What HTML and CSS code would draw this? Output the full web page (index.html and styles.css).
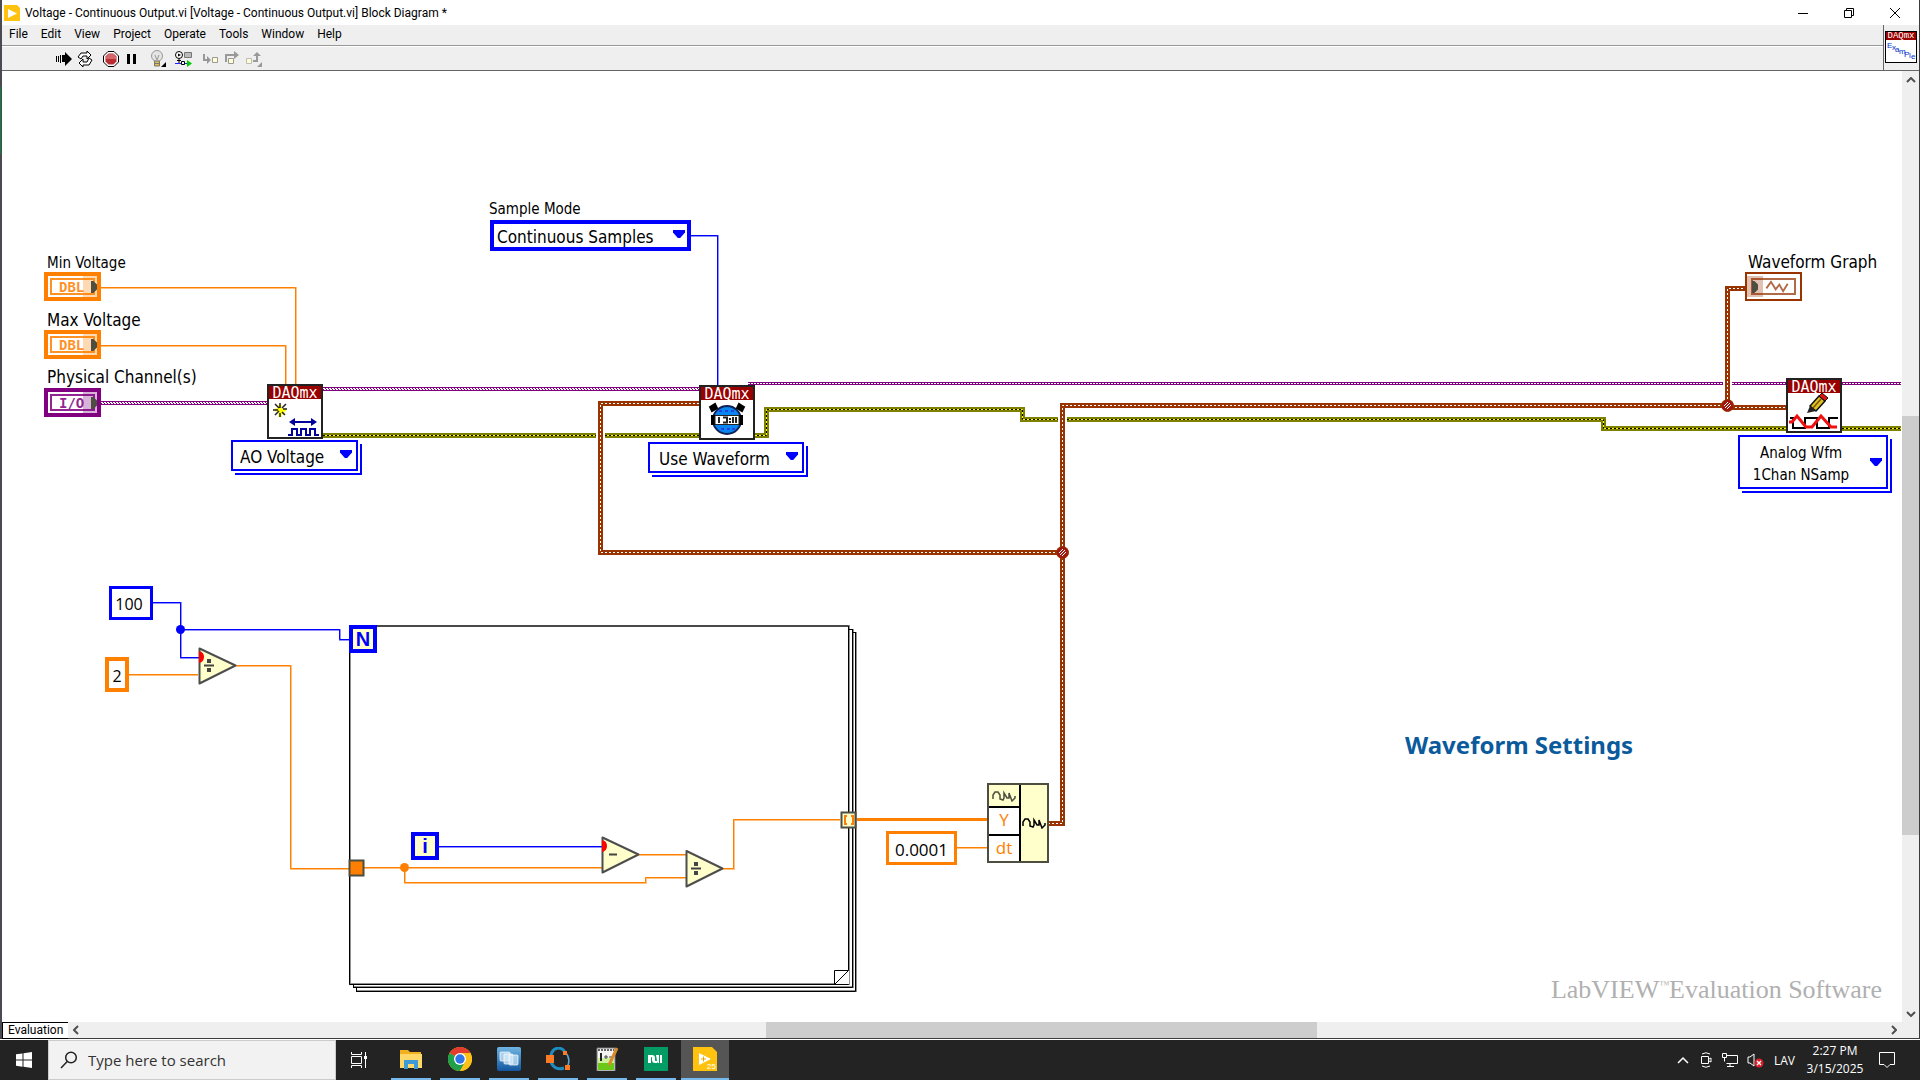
FILE: index.html
```html
<!DOCTYPE html>
<html lang="en">
<head>
<meta charset="utf-8">
<title>Voltage - Continuous Output.vi Block Diagram</title>
<link rel="stylesheet" href="styles.css">
</head>
<body>
<div class="window">
  <header class="titlebar">
    <svg class="app-icon" width="16" height="16" viewBox="0 0 16 16" aria-hidden="true"><path d="M0 0h13l3 3v13H0z" fill="#ffc20e"/><path d="M4 4l9 4.500-9 4.500z" fill="#fff"/></svg>
    <h1>Voltage - Continuous Output.vi [Voltage - Continuous Output.vi] Block Diagram *</h1>
    <div class="window-buttons">
      <button aria-label="Minimize"><svg width="12" height="12" viewBox="0 0 12 12"><path d="M1 6.500h10" stroke="#000"/></svg></button>
      <button aria-label="Restore"><svg width="12" height="12" viewBox="0 0 12 12"><path d="M1.500 3.500h7v7h-7zM3.500 3V1.500h7v7H9" fill="none" stroke="#000"/></svg></button>
      <button aria-label="Close"><svg width="12" height="12" viewBox="0 0 12 12"><path d="M1 1l10 10M11 1L1 11" stroke="#000"/></svg></button>
    </div>
  </header>
  <div class="bars">
    <div class="bars-left">
      <nav class="menubar">
        <a href="#">File</a><a href="#">Edit</a><a href="#">View</a><a href="#">Project</a><a href="#">Operate</a><a href="#">Tools</a><a href="#">Window</a><a href="#">Help</a>
      </nav>
      <div class="toolbar">
        <button aria-label="Run"><svg width="16" height="16" viewBox="0 0 16 16"><path d="M0 5h1v6H0zM2 5h1v6H2zM4 4h1v8H4zM6 4h3V1l7 7-7 7v-4H6z"/></svg></button>
        <button aria-label="Run continuously"><svg width="16" height="16" viewBox="0 0 16 16" fill="#fff" stroke="#000"><path d="M1 6l3-4h6V0l4 4-4 4V5H6L4 8zM15 9l-3 5H6v2l-4-4 4-4v3h4l2-4z"/></svg></button>
        <button class="abort" aria-label="Abort"><svg width="16" height="16" viewBox="0 0 16 16"><path d="M5 .5h6L15.500 5v6L11 15.500H5L.5 11V5z" fill="#fff" stroke="#000"/><path d="M5.500 2.500h5l3 3v5l-3 3h-5l-3-3v-5z" fill="#b82c32"/><path d="M5.500 3h5l2.500 2.500V8H3V5.500z" fill="#d5666a"/></svg></button>
        <button aria-label="Pause"><svg width="16" height="16" viewBox="0 0 16 16"><path d="M3 3h3v10H3zM9 3h3v10H9z"/></svg></button>
        <button class="bulb" aria-label="Highlight execution"><svg width="16" height="18" viewBox="0 0 16 18"><circle cx="7" cy="6" r="5.500" fill="#e4e4e4" stroke="#999"/><path d="M5 5l2 5 2-5" fill="none" stroke="#999"/><path d="M4.500 11h5v5h-5z" fill="#e3bd45" stroke="#777"/><path d="M5 13.500h4" stroke="#777"/><path d="M16 12v5h-5z"/></svg></button>
        <button class="retain" aria-label="Retain wire values"><svg width="17" height="16" viewBox="0 0 17 16"><circle cx="4" cy="4" r="3.500" fill="#fff" stroke="#000"/><path d="M3 2.500L6 4 3 5.500zM3.500 7.500h1V12h-1zM2 9h4v1H2z"/><path d="M9.500 1.500h7v5h-7z" fill="#bbb" stroke="#777"/><path d="M0 12.500h12" stroke="#22f"/><path d="M6.500 10.500h3v3h-3z" fill="#fff" stroke="#000"/><path d="M12 9l5 3.500-5 3.500z" fill="#0c0"/></svg></button>
        <button class="step" aria-label="Step into"><svg width="17" height="16" viewBox="0 0 17 16"><path d="M2 3v6h4" fill="none" stroke="#999" stroke-width="2"/><path d="M5 5l4 4-4 4z" fill="#999"/><path d="M10.500 6.500h5v5h-5z" fill="#ffffd0" stroke="#999"/></svg></button>
        <button aria-label="Step over"><svg width="16" height="16" viewBox="0 0 16 16"><path d="M2 11V4h9" fill="none" stroke="#999" stroke-width="2"/><path d="M10 0l5 4-5 4z" fill="#999"/><path d="M4.500 7.500h5v5h-5z" fill="#ffffd0" stroke="#999"/></svg></button>
        <button aria-label="Step out"><svg width="18" height="16" viewBox="0 0 18 16"><path d="M1.500 7.500h5v5h-5z" fill="#ffffd0" stroke="#bbb"/><path d="M8 10h4V5" fill="none" stroke="#999" stroke-width="2"/><path d="M8 5l4-4 4 4z" fill="#999"/><path d="M17 11v5h-5z" fill="#999"/></svg></button>
      </div>
    </div>
    <div class="vi-icon"><div class="vi-box"><b>DAQmx</b><svg width="30" height="22" viewBox="0 0 30 22" class="example"><text x="1" y="8">E</text><text x="6" y="10">x</text><text x="9" y="12">a</text><text x="13" y="14">m</text><text x="18" y="17">P</text><text x="23" y="18">l</text><text x="25" y="19">e</text></svg></div></div>
  </div>
  <div class="work">
    <main class="canvas">
      <div class="sheet">
        <svg class="wires" width="10" height="10" aria-hidden="true">
          <g class="error"><path d="M323 435.500H596M605 435.500H766.500V409.500H1022.500V419.500H1058M1067 419.500H1603.500V428.500H1901"/><path class="core" d="M323 435.500H596M605 435.500H766.500V409.500H1022.500V419.500H1058M1067 419.500H1603.500V428.500H1901"/><path class="dash" d="M323 435.500H596M605 435.500H766.500V409.500H1022.500V419.500H1058M1067 419.500H1603.500V428.500H1901"/></g>
          <g class="task"><path d="M101 403H267M323 389H699"/><path class="t-dots" d="M101 402.500H267M323 388.500H699"/><path class="t-dots" d="M102 403.500H267M324 389.500H699"/><path class="thin" d="M748 383.500H1723M1732 383.500H1901"/><path class="t-dots" d="M748 383.500H1723M1732 383.500H1901"/></g>
          <g class="wave"><path d="M699 403.500H600.500V552.500H1062.500M1048 823.500H1062.500V405.500H1727.500V288.500H1746M1727 407.500H1786"/><path class="dash" d="M699 403.500H600.500V552.500H1062.500M1048 823.500H1062.500V405.500H1727.500V288.500H1746M1727 407.500H1786"/></g>
          <g class="joint"><circle cx="1062.500" cy="552.500" r="6"/><circle cx="1727.500" cy="405.500" r="6"/><path d="M1060 555l5-5M1059 553l4-4M1062 556l4-4M1725 408l5-5M1724 406l4-4M1727 409l4-4"/></g>
          <g class="dbl-halo"><path d="M101 288H296V384M101 346H286V384M129 675H198M236 666H291V869H349M364 868H602M405 868V883H646V878H686M639 855H686M722 869H734V820H840M957 848H987"/></g>
          <g class="dbl"><path d="M101 287.500H295.500V384M101 345.500H285.500V384M129 674.500H198M236 665.500H290.500V868.500H349M364 867.500H602M404.500 867.500V882.500H645.500V877.500H686M639 854.500H686M722 868.500H733.500V819.500H840M957 847.500H987"/><path class="array" d="M857 819.500H987"/></g>
          <g class="int-halo"><path d="M691 236H718V385M153 603H181V658H199M180 630H340V640H349M439 847H602"/></g>
          <g class="int"><path d="M691 235.500H717.500V385M153 602.500H180.500V657.500H199M180 629.500H339.500V639.500H349M439 846.500H602"/></g>
          <circle cx="180.500" cy="629.500" r="4.500" fill="#00f"/><circle cx="404.500" cy="867.500" r="4.500" fill="#ff8000"/>
          <g class="loop-halo"><path d="M356 991H856V632M353 987H853V629M350 626V984H849V626z"/></g>
          <g class="loop"><path d="M356 991.500H855.500V632M353 987.500H852.500V629M349.500 626V984.500H848.500V626zM353.500 985V988M356.500 988V992M849 629.500H853M853 632.500H856"/></g>
          <path d="M834 984h15v-14z" fill="#fff"/><path d="M834.500 984.500V970.500H848.500z" fill="#fff" stroke="#000"/>
          <g class="fn"><path d="M199.500 648.500L235.500 665.500 199.500 683.500z"/><path d="M602.500 837.500L638.500 854.500 602.500 872.500z"/><path d="M686.500 851L722.500 868.500 686.500 886.500z"/></g>
          <g fill="#444"><path d="M204 664.500h10v2h-10zM207 659h4v4h-4zM207 668h4v4h-4zM609 853.500h8v2h-8zM691 867.500h10v2h-10zM694 862h4v4h-4zM694 871h4v4h-4z"/></g>
          <path d="M199 651q5 1 5 6t-5 6zM602 840q5 1 5 6t-5 6z" fill="red"/>
          <path d="M349.500 860.500h14v15h-14z" fill="#ff8000" stroke="#4d4d40" stroke-width="2"/>
          <path d="M841.500 812.500h14v15h-14z" fill="#ffffd0" stroke="#4d4d40" stroke-width="2"/>
          <path d="M847 816h-2v8h2M851 816h2v8h-2" fill="none" stroke="#ff8000" stroke-width="2"/>
        </svg>

        <span class="label small min-label">Min Voltage</span>
        <span class="label max-label">Max Voltage</span>
        <span class="label phys-label">Physical Channel(s)</span>
        <div class="terminal min"><span>DBL</span></div>
        <div class="terminal max"><span>DBL</span></div>
        <div class="terminal io"><span>I/O</span></div>

        <label class="label small mode-label" for="mode">Sample Mode</label>
        <div class="ring mode"><select id="mode"><option>Continuous Samples</option></select></div>

        <div class="daq daq-create"><b>DAQmx</b>
          <svg width="52" height="38" viewBox="0 0 52 38"><path d="M11 6v12M6 11h11M9 9l6 6" stroke="#ff0" stroke-width="3"/><path d="M11 4v5M4 11h5M6 5l4 4M17 5l-4 4M11 14v4M6 16l4-4M13 13l3 3M14 10h4" stroke="#222" stroke-width="1.500"/><path d="M22 23h24" stroke="#00009c" stroke-width="2"/><path d="M20 23l6-4v8zM48 23l-6-4v8z" fill="#00009c"/><path d="M19 36h4v-6h5v6h4v-6h5v6h4v-6h5v6h4" fill="none" stroke="#00009c" stroke-width="2"/></svg></div>
        <div class="ring stacked ao"><select aria-label="Channel type"><option>AO Voltage</option></select></div>

        <div class="daq daq-timing"><b>DAQmx</b>
          <svg width="52" height="38" viewBox="0 0 52 38"><circle cx="26" cy="20" r="14" fill="#0a84f0" stroke="#125" stroke-width="2"/><path d="M9 7l5-3 2 4-5 3zM43 7l-5-3-2 4 5 3z" fill="#000" stroke="#000" stroke-width="2"/><path d="M18 11h3m3 0h3m3 0h3M20 29h3m3 0h3m2 0h3" stroke="#24d" stroke-width="2"/><path d="M10 15h5v10h-5zM37 15h5v10h-5z"/><path d="M14 15.500h24v9H14z" fill="#fff" stroke="#222"/><path d="M18 17v6M22 17.500h4v5h-4M29 18v2m0 1v2M32 17v6M35 17v6" fill="none" stroke="#222" stroke-width="2"/></svg></div>
        <div class="ring stacked use"><select aria-label="Timing source"><option>Use Waveform</option></select></div>

        <div class="daq daq-write"><b>DAQmx</b>
          <svg width="52" height="38" viewBox="0 0 52 38"><path d="M2 25h3v10h12V25h12v10h12V25h9" fill="none" stroke="#000" stroke-width="2"/><path d="M1 29h3l5-6 9 11h6l9-11 10 11h6" fill="none" stroke="#f01010" stroke-width="3"/><path d="M22 13l9-10 6 5-9 10z" fill="#e0c020" stroke="#111" stroke-width="1.500"/><path d="M31 3l3-3 6 5-3 3z" fill="#e01010" stroke="#111"/><path d="M19 20l3-7 6 5z" fill="#222"/><path d="M25 15l8-9" stroke="#785810" stroke-width="1.500"/></svg></div>
        <div class="ring stacked write"><button aria-haspopup="listbox">Analog Wfm<br>1Chan NSamp</button></div>

        <span class="label graph-label">Waveform Graph</span>
        <div class="terminal graph"><svg width="26" height="14" viewBox="0 0 26 14"><path d="M1 9l5-7 5 8 4-5 4 7 5-8" fill="none" stroke="#b06a48" stroke-width="2"/></svg></div>

        <input class="constant c100" value="100" aria-label="Sample count">
        <input class="constant c2" value="2" aria-label="Divisor">
        <input class="constant c-dt" value="0.0001" aria-label="Sample interval">
        <div class="loop-term n-term">N</div>
        <div class="loop-term i-term">i</div>

        <div class="build">
          <div class="build-in"><div class="head"><svg width="24" height="12" viewBox="0 0 24 12"><path d="M1 9V5l2-3h3l2 3v4l3 1 1-2V3l3 5h2V3l3 8 3-3V6" fill="none" stroke="#4d4d40" stroke-width="1.500"/></svg></div><div>Y</div><div>dt</div></div>
          <div class="build-out"><svg width="24" height="12" viewBox="0 0 24 12"><path d="M1 9V5l2-3h3l2 3v4l3 1 1-2V3l3 5h2V3l3 8 3-3V6" fill="none" stroke="#000" stroke-width="1.500"/></svg></div>
        </div>
        <h2 class="note">Waveform Settings</h2>
      </div>
      <div class="watermark">LabVIEW<sup>™</sup>Evaluation Software</div>
    </main>
    <div class="vscroll"><svg width="10" height="6" viewBox="0 0 10 6"><path d="M1 5l4-4 4 4" fill="none" stroke="#505050" stroke-width="2"/></svg><div class="vtrack"><div class="vthumb"></div></div><svg width="10" height="6" viewBox="0 0 10 6"><path d="M1 1l4 4 4-4" fill="none" stroke="#505050" stroke-width="2"/></svg></div>
  </div>
  <div class="hscroll"><span class="context">Evaluation</span><svg width="6" height="10" viewBox="0 0 6 10"><path d="M5 1L1 5l4 4" fill="none" stroke="#505050" stroke-width="2"/></svg><div class="htrack"><div class="hthumb"></div></div><svg width="6" height="10" viewBox="0 0 6 10"><path d="M1 1l4 4-4 4" fill="none" stroke="#505050" stroke-width="2"/></svg></div>
</div>

<footer class="taskbar">
  <button class="start" aria-label="Start"><svg width="16" height="16" viewBox="0 0 16 16" fill="#fff"><path d="M0 2.300L6.500 1.400V7.600H0zM7.500 1.200L16 0v7.600H7.500zM0 8.500h6.500v6.200L0 13.800zM7.500 8.500H16V16l-8.500-1.200z"/></svg></button>
  <div class="search"><svg width="18" height="18" viewBox="0 0 18 18" fill="none" stroke="#222" stroke-width="1.500"><circle cx="11" cy="6.500" r="5.300"/><path d="M7.200 10.500L1 17"/></svg><input placeholder="Type here to search" aria-label="Search"></div>
  <button class="taskview" aria-label="Task view"><svg width="16" height="16" viewBox="0 0 16 16" fill="none" stroke="#fff"><path d="M.5 0v2.500h10V0M.5 16v-2.500h10V16M.5 4.500h10v7H.5zM14.500 0v16"/><path d="M13 4h3v3h-3z" fill="#fff" stroke="none"/></svg></button>
  <div class="apps">
    <button aria-label="File Explorer"><svg width="24" height="24" viewBox="0 0 24 24"><path d="M1 3h8l2 2h11v15H1z" fill="#f0b020"/><path d="M1 7h22v14H1z" fill="#ffd968"/><path d="M5 22v-9h14v9h-4v-5H9v5z" fill="#3f9bd8"/></svg></button>
    <button aria-label="Chrome"><svg width="24" height="24" viewBox="0 0 24 24"><circle cx="12" cy="12" r="12" fill="#fbc116"/><path d="M12 12L1.600 6A12 12 0 0 1 22.400 6z" fill="#e33b2e"/><path d="M12 12L1.600 6A12 12 0 0 0 12 24l5-9z" fill="#1fa04b"/><path d="M12 6h10.400A12 12 0 0 1 12 24l5.200-9z" fill="#fbc116"/><circle cx="12" cy="12" r="6" fill="#fff"/><circle cx="12" cy="12" r="4.700" fill="#2f76e8"/></svg></button>
    <button aria-label="VMware"><svg width="24" height="24" viewBox="0 0 24 24"><defs><linearGradient id="vm" x2="0" y2="1"><stop stop-color="#6fb6e4"/><stop offset="1" stop-color="#1356a0"/></linearGradient></defs><rect width="24" height="24" rx="2" fill="url(#vm)"/><g fill="#d6ebfa" fill-opacity=".7" stroke="#fff" stroke-width=".7"><rect x="3" y="5" width="10" height="9" rx="1"/><rect x="7" y="7" width="9" height="10" rx="1"/><rect x="12" y="8" width="9" height="10" rx="1"/></g></svg></button>
    <button aria-label="Octave"><svg width="26" height="24" viewBox="0 0 26 24"><path d="M20 5C16-1 8 0 6 8c-2 9 4 16 13 13" fill="none" stroke="#1d8dc0" stroke-width="3"/><path d="M20 5c5 5 5 12 1 16" fill="none" stroke="#59a8d0" stroke-width="1.500"/><path d="M1 8h8v8H1zM18 4h4v4h-4zM20 18h5v5h-5z" fill="#ff7a24"/></svg></button>
    <button aria-label="Notepad++"><svg width="24" height="24" viewBox="0 0 24 24"><path d="M2 1h18v23H2z" fill="#f4f4f4" stroke="#777"/><path d="M3 16h16v7H3z" fill="#6cc818"/><path d="M3 11h16v5H3z" fill="#cdf09a"/><path d="M3 3h16" stroke="#666" stroke-width="2" stroke-dasharray="2 1"/><path d="M6 6v8" stroke="#222" stroke-width="2"/><path d="M9 10h4M11 8v4M14 10h4" stroke="#444"/><path d="M14 18L22 1" stroke="#d98a2b" stroke-width="3"/></svg></button>
    <button aria-label="NI Package Manager"><svg width="24" height="24" viewBox="0 0 24 24"><path d="M0 0h24v24H0z" fill="#029c64"/><path d="M4 16V8h4q3 0 3 3v2q0 1 1 1h1v2h-2q-3 0-3-3v-2q0-1-1-1v6zM12 8h3v8h-1q-1 0-1-2zM16 8h2v8h-2z" fill="#fff"/></svg></button>
    <button class="active" aria-label="LabVIEW"><svg width="24" height="24" viewBox="0 0 24 24"><path d="M0 0h19l5 5v19H0z" fill="#ffc20e"/><path d="M6 6l12 6-12 6z" fill="#fff"/><path d="M8 12h5M10.500 9.500v5" stroke="#e8a800"/><text x="14" y="22" font-family="Liberation Sans" font-size="8" fill="#fff">25</text></svg></button>
  </div>
  <div class="tray">
    <svg width="14" height="14" viewBox="0 0 14 14"><path d="M2 10l5-5 5 5" fill="none" stroke="#fff" stroke-width="1.500"/></svg>
    <svg width="14" height="16" viewBox="0 0 14 16" fill="none" stroke="#fff"><path d="M3 2q4-2.500 8 0M3 14q4 2.500 8 0M2.500 4.500h7v7h-7zM10 7l2-1v4l-2-1"/></svg>
    <svg width="16" height="14" viewBox="0 0 16 14" fill="none" stroke="#fff"><path d="M4 2.500h11.500v8H4.500M.5.500h4v4h-4zM2.500 5v3.500M8 11v2.500M5 13.500h7"/></svg>
    <svg width="17" height="16" viewBox="0 0 17 16"><path d="M1 5h2l4-3v12l-4-3H1z" fill="none" stroke="#fff"/><circle cx="12" cy="11" r="4.500" fill="#d8202c"/><path d="M10 9l4 4M14 9l-4 4" stroke="#fff" stroke-width="1.300"/></svg>
    <span class="lang">LAV</span>
    <div class="clock"><span>2:27 PM</span><span>3/15/2025</span></div>
    <svg class="notify" width="16" height="16" viewBox="0 0 16 16"><path d="M.5.500h15v12H11l-3 3-3-3H.5z" fill="none" stroke="#fff"/></svg>
  </div>
</footer>
</body>
</html>
```
FILE: styles.css
```css
* { box-sizing: border-box; }
body {
  margin: 0;
  height: 100vh;
  display: flex;
  flex-direction: column;
  overflow: hidden;
  background: #fff;
  color: #000;
  font: 12px "Open Sans", sans-serif;
}
button, input, select { font: inherit; color: inherit; border: 0; padding: 0; margin: 0; background: none; }
svg { display: block; flex: none; }

.window {
  flex: 1;
  min-height: 0;
  display: flex;
  flex-direction: column;
  border: solid #3c3c3c;
  border-width: 0 1px 1px 2px;
  border-left-color: #4a4a50;
  margin-bottom: 1px;
  position: relative;
}
.window::before { content: ""; position: absolute; left: -2px; top: 87px; width: 1px; height: 67px; background: #107c41; }

.titlebar { height: 25px; display: flex; align-items: center; padding-left: 2px; gap: 5px; }
.titlebar h1 { margin: 0; font: 12px/24px Roboto, sans-serif; white-space: nowrap; }
.window-buttons { margin-left: auto; display: flex; padding-right: 1px; }
.window-buttons button { width: 46px; height: 22px; display: flex; align-items: center; justify-content: center; }

.bars { height: 46px; display: flex; background: #efefef; border-bottom: 1px solid #666; }
.bars-left { flex: 1; display: flex; flex-direction: column; }
.menubar { height: 21px; display: flex; gap: 13px; padding-left: 7px; border-bottom: 1px solid #999; font-family: Roboto, sans-serif; }
.menubar a { color: #000; text-decoration: none; line-height: 18px; }
.toolbar { flex: 1; display: flex; align-items: center; border-top: 1px solid #fff; padding-left: 54px; gap: 5px; }
.abort, .step { margin-left: 5px; }
.bulb { margin-left: 5px; }
.retain { margin-left: 4px; }
.vi-icon { width: 36px; border-left: 1px solid #666; padding: 6px 1px; }
.vi-box { width: 32px; height: 32px; border: 1px solid #000; background: #fff; }
.vi-box b { display: block; height: 8px; background: #900; color: #fff; font: 9px/8px "Liberation Mono", monospace; text-align: center; }
.example { font: 8px "Liberation Sans", sans-serif; fill: #0033cc; }

.work { flex: 1; min-height: 0; display: flex; }
.canvas { flex: 1; position: relative; overflow: hidden; background: #fff; font: 17px "DejaVu Sans Condensed", "DejaVu Sans", sans-serif; font-stretch: condensed; }
/* diagram coordinates start at the window corner */
.sheet { position: absolute; left: -2px; top: -71px; }

.wires { position: absolute; left: 0; top: 0; overflow: visible; }
.error path { fill: none; stroke: #808000; stroke-width: 5; }
.error .core { stroke: #ff0; stroke-width: 1; }
.error .dash { stroke: #000; stroke-width: 1; stroke-dasharray: 2 2; }
.task path { fill: none; stroke: #800080; stroke-width: 4; }
.task .thin { stroke-width: 3; }
.task .t-dots { stroke: #fff; stroke-width: 1; stroke-dasharray: 2 1; }
.wave path { fill: none; stroke: #993300; stroke-width: 5; }
.wave .dash { stroke: #fff; stroke-width: 1; stroke-dasharray: 2 2; }
.joint circle { fill: #a01810; stroke: #993300; }
.joint path { stroke: #fff; }
.dbl-halo path { fill: none; stroke: #ffc080; stroke-width: 2; }
.dbl path { fill: none; stroke: #ff8000; }
.dbl .array { stroke-width: 3; }
.int-halo path { fill: none; stroke: #9090ff; stroke-width: 2; }
.int path { fill: none; stroke: #00f; }
.loop-halo path { fill: none; stroke: #909090; stroke-width: 2; }
.loop path { fill: none; stroke: #000; }
.fn path { fill: #ffffcc; stroke: #4d4d4d; stroke-width: 2; stroke-linejoin: round; }

.label { position: absolute; line-height: 20px; white-space: nowrap; }
.small { font-size: 15px; }
.min-label { left: 47px; top: 253px; }
.max-label { left: 47px; top: 310px; }
.phys-label { left: 47px; top: 367px; }
.mode-label { left: 489px; top: 199px; }
.graph-label { left: 1748px; top: 252px; }

.terminal { position: absolute; width: 57px; height: 29px; border: 4px solid #ff8000; background: #fff; padding: 2px; color: #ff8000; }
.terminal span { display: block; height: 17px; border: 2px solid currentColor; font: bold 14px/14px "DejaVu Sans Mono", monospace; padding-left: 7px; opacity: .85; }
.terminal::before { content: ""; position: absolute; right: -4px; top: 0; bottom: 0; width: 18px; background: currentColor; opacity: .3; }
.terminal::after { content: ""; position: absolute; right: 0; top: 5px; width: 6px; height: 12px; background: #4d4d40; clip-path: polygon(0 0, 40% 0, 100% 30%, 100% 70%, 40% 100%, 0 100%); }
.min { left: 44px; top: 272px; }
.max { left: 44px; top: 330px; }
.io { left: 44px; top: 388px; border-color: #800080; color: #800080; }
.graph { left: 1745px; top: 272px; border: 2px solid #993300; color: #993300; padding: 4px; }
.graph svg { width: 45px; height: 17px; border: 2px solid #b06a48; padding-left: 8px; }
.graph::before { left: 0; right: auto; top: 2px; bottom: 2px; width: 16px; }
.graph::after { left: 5px; right: auto; top: 7px; }

.ring { position: absolute; display: flex; border: 2px solid #00f; background: #fff; }
.ring select, .ring button { appearance: none; flex: 1; min-width: 0; outline: 0; text-align: left; padding-top: 3px; }
.ring::after { content: ""; position: absolute; right: 4px; top: 8px; width: 12px; height: 8px; background: #00f; clip-path: polygon(0 0, 100% 0, 100% 30%, 60% 100%, 40% 100%, 0 30%); }
.stacked { box-shadow: 2px 2px 0 #fff, 4px 4px 0 #00f; }
.mode { left: 490px; top: 220px; width: 201px; height: 31px; border-width: 4px; }
.mode select { padding-left: 3px; }
.mode::after { top: 6px; right: 2px; }
.ao { left: 231px; top: 440px; width: 127px; height: 31px; }
.ao select { padding-left: 7px; }
.use { left: 648px; top: 442px; width: 156px; height: 31px; }
.use select { padding-left: 9px; }
.write { left: 1738px; top: 435px; width: 150px; height: 54px; }
.write button { font-size: 15px; line-height: 22px; text-align: center; padding-right: 24px; }
.write::after { top: 21px; }

.daq { position: absolute; width: 56px; height: 55px; border: 2px solid #222; background: #fff; overflow: hidden; }
.daq b { display: block; height: 13px; background: #900; color: #fff; font: 15px/14px "DejaVu Sans Mono", monospace; text-align: center; }
.daq-create { left: 267px; top: 384px; }
.daq-timing { left: 699px; top: 385px; }
.daq-write { left: 1786px; top: 378px; }

.constant { position: absolute; border: 3px solid #ff8000; background: #fff; text-align: center; outline: 0; font: 17px "Open Sans", sans-serif; padding-top: 2px; }
.c100 { left: 109px; top: 586px; width: 44px; height: 34px; border-color: #00f; font-size: 16px; padding-right: 4px; }
.c2 { left: 105px; top: 657px; width: 24px; height: 35px; border-width: 4px; font-size: 16px; }
.c-dt { left: 886px; top: 831px; width: 71px; height: 34px; }
.loop-term { position: absolute; width: 28px; height: 28px; border: 4px solid #00f; background: #ffffcc; color: #00f; font: bold 20px/20px "Liberation Sans", sans-serif; text-align: center; }
.n-term { left: 349px; top: 625px; }
.i-term { left: 411px; top: 832px; }

.build { position: absolute; left: 987px; top: 783px; width: 62px; height: 80px; display: flex; border: 2px solid #4d4d40; background: #ffffcc; }
.build-in { width: 32px; display: grid; grid-template-rows: 21px 28px 27px; border-right: 2px solid #000; color: #ff8000; text-align: center; font: 17px/24px "Open Sans", sans-serif; }
.build-in div + div { border-top: 2px solid #000; background: #fff; }
.head { display: flex; align-items: center; justify-content: center; }
.build-out { flex: 1; display: flex; align-items: center; justify-content: center; }
.note { position: absolute; left: 1405px; top: 730px; margin: 0; font: bold 24px/30px "Noto Sans", sans-serif; color: #0a5a9c; white-space: nowrap; }
.watermark { position: absolute; right: 20px; bottom: 16px; color: #b0b0b0; font: 26px/32px "Liberation Serif", serif; white-space: nowrap; }
.watermark sup { font-size: 10px; line-height: 1; vertical-align: 10px; }

.vscroll { width: 17px; background: #efefef; display: flex; flex-direction: column; align-items: center; padding: 6px 0 5px; }
.vtrack { flex: 1; align-self: stretch; display: flex; flex-direction: column; }
.vthumb { margin-top: 333px; height: 419px; background: #cdcdcd; }
.hscroll { height: 16px; background: #efefef; display: flex; align-items: center; padding-right: 22px; }
.context { width: 66px; height: 17px; border: solid #000; border-width: 1px 0 1px 1px; padding-left: 5px; line-height: 14px; background: #fff; margin-right: 5px; font-family: Roboto, sans-serif; }
.htrack { flex: 1; align-self: stretch; display: flex; }
.hthumb { width: 551px; margin-left: 687px; background: #cdcdcd; }

.taskbar { height: 40px; display: flex; background: #232323; color: #fff; }
.taskbar button { display: flex; align-items: center; justify-content: center; }
.start { width: 48px; }
.search { width: 288px; background: #f2f2f2; border: 1px solid #ccc; display: flex; align-items: center; gap: 10px; padding-left: 11px; color: #222; font-size: 15px; }
.search input { flex: 1; min-width: 0; }
.search input::placeholder { color: #333; opacity: 1; }
.taskview { width: 46px; }
.apps { display: flex; gap: 9px; padding-left: 9px; }
.apps button { width: 40px; border-bottom: 2px solid #76b9ed; }
.apps .active { width: 48px; margin-left: -4px; background: #555; }
.tray { margin-left: auto; display: flex; align-items: center; gap: 9px; padding-right: 25px; }
.lang { margin-left: 1px; }
.clock { display: flex; flex-direction: column; align-items: center; line-height: 18px; width: 62px; }
.notify { margin-left: 4px; }
```
